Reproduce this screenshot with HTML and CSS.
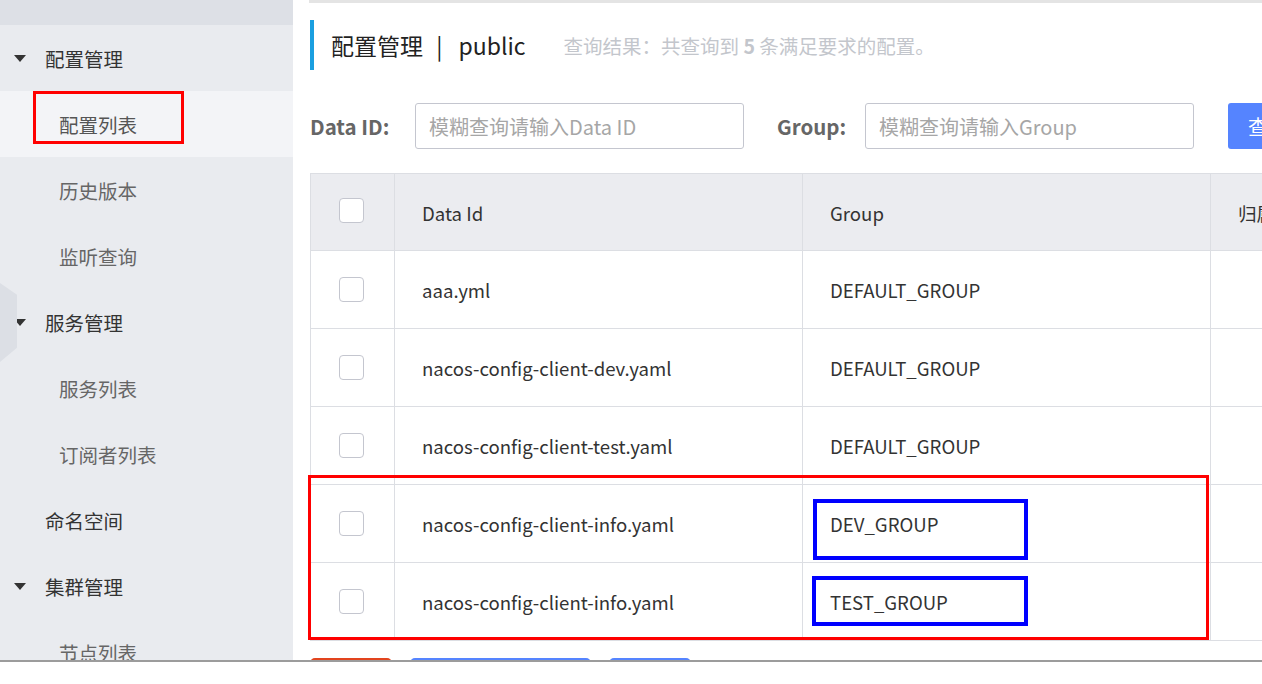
FILE: index.html
```html
<!DOCTYPE html>
<html lang="zh-CN">
<head>
<meta charset="utf-8">
<title>配置列表</title>
<link rel="stylesheet" href="styles.css">
</head>
<body>
<div class="app">
  <aside class="sidebar">
    <div class="side-top"></div>
    <div class="nav-group"><span class="caret"></span>配置管理</div>
    <div class="nav-item active"><span class="mark-red"></span>配置列表</div>
    <div class="nav-item">历史版本</div>
    <div class="nav-item">监听查询</div>
    <div class="nav-group"><span class="caret"></span>服务管理</div>
    <div class="nav-item">服务列表</div>
    <div class="nav-item">订阅者列表</div>
    <div class="nav-group plain">命名空间</div>
    <div class="nav-group"><span class="caret"></span>集群管理</div>
    <div class="nav-item">节点列表</div>
    <div class="hex"></div>
  </aside>
  <main class="main">
    <div class="top-line"></div>
    <div class="title-bar">
      <h1 class="title">配置管理 <span class="sep">|</span> public</h1>
      <span class="result">查询结果：共查询到 <b>5</b> 条满足要求的配置。</span>
    </div>
    <div class="search">
      <label class="label">Data ID:</label>
      <div class="input">模糊查询请输入Data ID</div>
      <label class="label label-group">Group:</label>
      <div class="input">模糊查询请输入Group</div>
      <button class="btn-query">查询</button>
    </div>
    <div class="table-wrap">
      <table class="table">
        <colgroup><col class="c1"><col class="c2"><col class="c3"><col class="c4"></colgroup>
        <thead>
          <tr><th class="chk"><span class="cb"></span></th><th>Data Id</th><th>Group</th><th>归属应用</th></tr>
        </thead>
        <tbody>
          <tr><td class="chk"><span class="cb"></span></td><td>aaa.yml</td><td>DEFAULT_GROUP</td><td></td></tr>
          <tr><td class="chk"><span class="cb"></span></td><td>nacos-config-client-dev.yaml</td><td>DEFAULT_GROUP</td><td></td></tr>
          <tr><td class="chk"><span class="cb"></span></td><td>nacos-config-client-test.yaml</td><td>DEFAULT_GROUP</td><td></td></tr>
          <tr><td class="chk"><span class="cb"></span></td><td>nacos-config-client-info.yaml</td><td>DEV_GROUP</td><td></td></tr>
          <tr><td class="chk"><span class="cb"></span></td><td>nacos-config-client-info.yaml</td><td>TEST_GROUP</td><td></td></tr>
        </tbody>
      </table>
      <div class="mark mark-rows"></div>
      <div class="mark mark-blue b1"></div>
      <div class="mark mark-blue b2"></div>
    </div>
    <div class="actions">
      <button class="btn btn-red">删除</button>
      <button class="btn btn-blue wide">导出选中的配置</button>
      <button class="btn btn-blue">克隆</button>
    </div>
  </main>
</div>
</body>
</html>
```
FILE: styles.css
```css
* { box-sizing: border-box; }
html, body { margin: 0; padding: 0; background: #fff; }
body {
  font-family: "Noto Sans CJK SC", "Noto Sans", sans-serif;
  color: #333;
}
.app {
  display: flex;
  height: 662px;
  overflow: hidden;
  border-bottom: 2px solid #9c9c9c;
}
.sidebar {
  position: relative;
  width: 293px;
  flex: none;
  background: #e9ebef;
}
.side-top { height: 25px; background: #dde0e6; }
.nav-group, .nav-item {
  position: relative;
  height: 66px;
  display: flex;
  align-items: center;
  font-size: 19.5px;
}
.nav-group { padding-left: 45px; color: #333; }
.nav-item { padding-left: 59px; color: #666; }
.nav-item.active { background: #f3f4f7; color: #555; }
.caret {
  position: absolute;
  left: 14px;
  top: 30px;
  width: 0; height: 0;
  border-left: 6.5px solid transparent;
  border-right: 6.5px solid transparent;
  border-top: 7px solid #333;
}
.mark-red {
  position: absolute;
  left: 33px; top: 0;
  width: 151px; height: 53px;
  border: 3px solid #ff0000;
}
.hex {
  position: absolute;
  left: 0; top: 283px;
  width: 17px; height: 79px;
  background: #dcdfe5;
  clip-path: polygon(0 0, 100% 15%, 100% 82%, 0 100%);
}
.main {
  flex: 1;
  min-width: 0;
  overflow: hidden;
  padding-left: 17px;
}
.top-line { height: 3px; background: #e4e4e4; margin-left: -1px; }
.title-bar {
  margin-top: 17px;
  height: 50px;
  border-left: 4px solid #1a9fe0;
  padding-left: 17px;
  display: flex;
  align-items: center;
  white-space: nowrap;
}
.title {
  margin: 0;
  font-size: 23px;
  font-weight: normal;
  color: #222;
}
.sep { margin: 0 11px 0 8px; }
.result {
  margin-left: 38px;
  font-size: 19.5px;
  color: #c3c6cc;
}
.result b { font-weight: bold; }
.search {
  margin-top: 33px;
  display: flex;
  align-items: center;
  white-space: nowrap;
}
.label {
  flex: none;
  font-size: 20.5px;
  font-weight: bold;
  color: #666;
  width: 105px;
}
.label-group { margin-left: 33px; width: 88px; }
.input {
  flex: none;
  width: 329px;
  height: 46px;
  border: 1px solid #c4c6cf;
  border-radius: 3px;
  padding-left: 13px;
  display: flex;
  align-items: center;
  font-size: 20px;
  color: #a6a6a6;
}
.btn-query {
  flex: none;
  margin-left: 34px;
  height: 46px;
  width: 90px;
  border: 0;
  border-radius: 3px;
  background: #5584ff;
  color: #fff;
  font-family: inherit;
  font-size: 20px;
  text-align: left;
  padding-left: 20px;
}
.table-wrap {
  position: relative;
  margin-top: 24px;
  width: 1400px;
}
.table {
  border-collapse: collapse;
  table-layout: fixed;
  width: 1308px;
  font-size: 18.6px;
  color: #333;
}
.c1 { width: 84px; }
.c2 { width: 408px; }
.c3 { width: 408px; }
.c4 { width: 408px; }
.table th, .table td {
  border: 1px solid #dcdee3;
  text-align: left;
  padding: 0 0 0 27px;
  height: 78px;
  font-weight: normal;
  white-space: nowrap;
}
.table th { background: #ebecf0; height: 77px; }
.table th.chk, .table td.chk { padding: 0 0 0 28px; line-height: 0; }
.table th.chk { padding-bottom: 3px; }
.cb {
  display: inline-block;
  width: 25px;
  height: 25px;
  border: 1px solid #c4c6cf;
  border-radius: 4px;
  background: #fff;
  vertical-align: middle;
}
.mark { position: absolute; }
.mark-rows {
  left: -2px; top: 302px;
  width: 901px; height: 165px;
  border: 3px solid #ff0000;
}
.mark-blue { border: 4px solid #0000ff; }
.b1 { left: 503px; top: 326px; width: 215px; height: 61px; }
.b2 { left: 502px; top: 403px; width: 216px; height: 50px; }
.actions {
  margin-top: 17px;
  display: flex;
  gap: 18px;
}
.btn {
  height: 40px;
  border: 0;
  border-radius: 5px;
  color: #fff;
  font-family: inherit;
  font-size: 18px;
}
.btn-red { width: 82px; background: #e2441e; }
.btn-blue { width: 82px; background: #5584ff; }
.btn-blue.wide { width: 181px; }
```
